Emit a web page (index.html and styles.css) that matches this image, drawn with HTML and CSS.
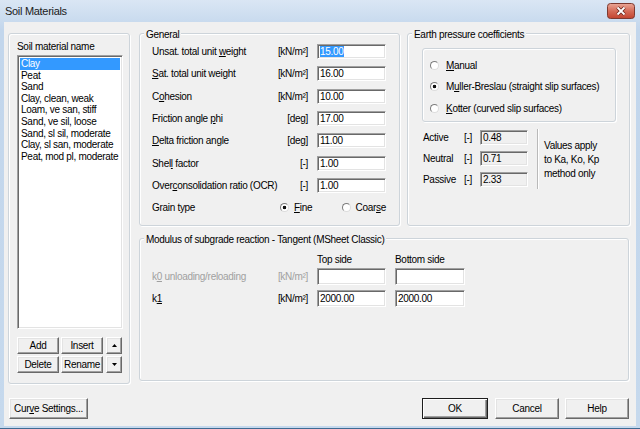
FILE: index.html
```html
<!DOCTYPE html>
<html lang="en">
<head>
  <meta charset="UTF-8">
  <title>Soil Materials</title>
  <link rel="stylesheet" href="styles.css">
</head>
<body>
  <div id="window">
    <div id="titlebar">
      <span class="title">Soil Materials</span>
      <span class="close-btn">
        <svg width="28" height="16" viewBox="0 0 28 16">
          <defs>
            <linearGradient id="closeGrad" x1="0" y1="0" x2="0" y2="1">
              <stop offset="0" stop-color="#eaa898"/>
              <stop offset="0.5" stop-color="#d56c58"/>
              <stop offset="1" stop-color="#c3432e"/>
            </linearGradient>
          </defs>
          <rect x="0.5" y="0.5" width="27" height="15" rx="3" fill="url(#closeGrad)" stroke="#7d3a30"/>
          <path d="M10.5 4.5 L17.5 11.5 M17.5 4.5 L10.5 11.5" stroke="#6a261d" stroke-width="3.4"/>
          <path d="M10.5 4.5 L17.5 11.5 M17.5 4.5 L10.5 11.5" stroke="#fff" stroke-width="1.8"/>
        </svg>
      </span>
    </div>

    <div id="client">
      <div class="main">
        <div class="group materials">
          <div class="list-label">Soil material name</div>
          <div class="listbox">
            <div class="item selected">Clay</div>
            <div class="item">Peat</div>
            <div class="item">Sand</div>
            <div class="item">Clay, clean, weak</div>
            <div class="item">Loam, ve san, stiff</div>
            <div class="item">Sand, ve sil, loose</div>
            <div class="item">Sand, sl sil, moderate</div>
            <div class="item">Clay, sl san, moderate</div>
            <div class="item">Peat, mod pl, moderate</div>
          </div>
          <div class="list-buttons">
            <div class="btn-row">
              <button class="btn">Add</button>
              <button class="btn">Insert</button>
              <button class="btn arrow"><svg width="5" height="3" viewBox="0 0 5 3"><path d="M2.5 0 L5 3 L0 3Z"/></svg></button>
            </div>
            <div class="btn-row">
              <button class="btn">Delete</button>
              <button class="btn">Rename</button>
              <button class="btn arrow"><svg width="5" height="3" viewBox="0 0 5 3"><path d="M0 0 L5 0 L2.5 3Z"/></svg></button>
            </div>
          </div>
        </div>

        <div class="right-col">
          <div class="top-row">
            <div class="group general">
              <div class="group-title">General</div>
              <div class="form-grid">
                <span class="label">Unsat. total unit <u>w</u>eight</span>
                <span class="unit">[kN/m²]</span>
                <span class="field"><span class="sel">15.00</span></span>

                <span class="label"><u>S</u>at. total unit weight</span>
                <span class="unit">[kN/m²]</span>
                <span class="field">16.00</span>

                <span class="label">C<u>o</u>hesion</span>
                <span class="unit">[kN/m²]</span>
                <span class="field">10.00</span>

                <span class="label">Friction angle <u>p</u>hi</span>
                <span class="unit">[deg]</span>
                <span class="field">17.00</span>

                <span class="label"><u>D</u>elta friction angle</span>
                <span class="unit">[deg]</span>
                <span class="field">11.00</span>

                <span class="label">Shel<u>l</u> factor</span>
                <span class="unit">[-]</span>
                <span class="field">1.00</span>

                <span class="label">Over<u>c</u>onsolidation ratio (OCR)</span>
                <span class="unit">[-]</span>
                <span class="field">1.00</span>

                <span class="label">Grain type</span>
                <span class="grain">
                  <span class="radio"><span class="dot checked"></span><span><u>F</u>ine</span></span>
                  <span class="radio"><span class="dot"></span><span>Coar<u>s</u>e</span></span>
                </span>
              </div>
            </div>

            <div class="group earth">
              <div class="group-title">Earth pressure coefficients</div>
              <div class="group radio-box">
                <span class="radio wide"><span class="dot"></span><span><u>M</u>anual</span></span>
                <span class="radio wide"><span class="dot checked"></span><span>M<u>u</u>ller-Breslau (straight slip surfaces)</span></span>
                <span class="radio wide"><span class="dot"></span><span><u>K</u>otter (curved slip surfaces)</span></span>
              </div>
              <div class="coef">
                <div class="coef-grid">
                  <span>Active</span><span>[-]</span><span class="field ro">0.48</span>
                  <span>Neutral</span><span>[-]</span><span class="field ro">0.71</span>
                  <span>Passive</span><span>[-]</span><span class="field ro">2.33</span>
                </div>
                <div class="sep"></div>
                <div class="notes">Values apply<br>to Ka, Ko, Kp<br>method only</div>
              </div>
            </div>
          </div>

          <div class="group modulus">
            <div class="group-title">Modulus of subgrade reaction - Tangent (MSheet Classic)</div>
            <div class="mod-grid">
              <span></span><span></span>
              <span class="col-head">Top side</span>
              <span class="col-head">Bottom side</span>

              <span class="label disabled">k<u>0</u> unloading/reloading</span>
              <span class="unit disabled">[kN/m²]</span>
              <span class="field tall"></span>
              <span class="field tall"></span>

              <span class="label k1">k<u>1</u></span>
              <span class="unit k1">[kN/m²]</span>
              <span class="field tall k1">2000.00</span>
              <span class="field tall k1">2000.00</span>
            </div>
          </div>
        </div>
      </div>

      <div class="footer">
        <button class="btn big curve">Cur<u>v</u>e Settings...</button>
        <div class="dlg-buttons">
          <button class="btn big default">OK</button>
          <button class="btn big">Cancel</button>
          <button class="btn big">Help</button>
        </div>
      </div>
    </div>
  </div>
</body>
</html>
```

FILE: styles.css
```css
body {
  margin: 0;
  font-family: "Liberation Sans", Arial, sans-serif;
  font-size: 10px;
  letter-spacing: -0.3px;
  color: #000;
}
#window {
  width: 640px;
  height: 429px;
  box-sizing: border-box;
  display: flex;
  flex-direction: column;
  padding: 0 4px 2px;
  background: linear-gradient(#dae6f4, #c2d6ec 30px, #c6d9ed);
  border-bottom: 1px solid #3e6a92;
}
#titlebar {
  height: 22px;
  margin: 0 -4px;
  padding: 0 5px;
  display: flex;
  align-items: center;
  justify-content: space-between;
}
#titlebar .title {
  font-size: 11px;
  color: #1b1b1b;
}
.close-btn {
  display: flex;
  width: 28px;
  height: 16px;
}
#client {
  flex: 1;
  background-color: #f0f0f0;
  padding: 11px 6px 0 4px;
  display: flex;
  flex-direction: column;
}
.main {
  display: flex;
  gap: 9px;
  align-items: flex-start;
}

/* group boxes */
.group {
  box-sizing: border-box;
  border: 1px solid #cdd4da;
  border-radius: 3px;
  box-shadow: inset 1px 1px #fff, 1px 1px #fff;
  display: flex;
  flex-direction: column;
}
.group-title {
  align-self: flex-start;
  margin: -5px 0 0 4px;
  padding: 0 2px;
  background-color: #f0f0f0;
  line-height: 12px;
  white-space: nowrap;
}

/* sunken controls */
.field, .listbox {
  box-sizing: border-box;
  background-color: #fff;
  border: 1px solid;
  border-color: #a0a0a0 #fff #fff #a0a0a0;
  box-shadow: inset 1px 1px #696969, inset -1px -1px #e3e3e3;
}
.field {
  height: 15px;
  padding-left: 2px;
  display: flex;
  align-items: center;
  white-space: nowrap;
}
.field.tall {
  height: 17px;
}
.field.ro {
  background-color: #f0f0f0;
}
.sel {
  background-color: #3399ff;
  color: #fff;
}

/* buttons */
.btn {
  box-sizing: border-box;
  margin: 0;
  padding: 0;
  font: inherit;
  letter-spacing: inherit;
  color: #000;
  background-color: #f0f0f0;
  border: 1px solid;
  border-color: #fff #696969 #696969 #fff;
  box-shadow: inset -1px -1px #a0a0a0, inset 1px 1px #e3e3e3;
  display: flex;
  align-items: center;
  justify-content: center;
}
.btn.default {
  border-color: #1e1e1e;
  box-shadow: inset 1px 1px #fff, inset -1px -1px #696969, inset -2px -2px #a0a0a0;
}

/* left: material list */
.materials {
  width: 122px;
  height: 351px;
  padding: 7px 6px 0 8px;
}
.list-label {
  line-height: 12px;
  margin-bottom: 2px;
}
.listbox {
  height: 274px;
  padding: 2px 2px 0 2px;
}
.listbox .item {
  line-height: 11.6px;
  padding-left: 1px;
  white-space: nowrap;
}
.listbox .item.selected {
  background-color: #3399ff;
  color: #fff;
}
.list-buttons {
  margin-top: 8px;
  display: flex;
  flex-direction: column;
  gap: 2px;
}
.btn-row {
  display: flex;
  gap: 2px;
}
.btn-row .btn {
  width: 42px;
  height: 17px;
}
.btn-row .btn.arrow {
  width: 16px;
  margin-left: 1px;
}

/* right column */
.right-col {
  display: flex;
  flex-direction: column;
  width: 491px;
}
.top-row {
  display: flex;
  gap: 7px;
}
.general {
  width: 261px;
  height: 193px;
}
.form-grid {
  display: grid;
  grid-template-columns: 111px 36px 69px;
  grid-auto-rows: 15px;
  column-gap: 9px;
  row-gap: 7.33px;
  align-items: center;
  margin: 3px 0 0 12px;
}
.label {
  white-space: nowrap;
}
.unit {
  justify-self: end;
  white-space: nowrap;
}
.grain {
  grid-column: 2 / 4;
  display: flex;
  justify-content: space-between;
  padding-left: 8px;
}
.radio {
  display: inline-flex;
  align-items: center;
  gap: 5px;
  white-space: nowrap;
}
.radio.wide {
  gap: 7px;
  height: 12px;
}
.dot {
  box-sizing: border-box;
  width: 9px;
  height: 9px;
  border-radius: 50%;
  border: 1px solid;
  border-color: #7c7c7c #dcdcdc #dcdcdc #7c7c7c;
  background: #fff;
}
.dot.checked {
  background: radial-gradient(circle, #111 0 1.4px, #fff 2.1px);
}

/* earth pressure */
.earth {
  width: 223px;
  height: 193px;
}
.radio-box {
  margin: 7px 0 0 14px;
  width: 194px;
  height: 74px;
  padding: 10px 0 0 7px;
  gap: 9.5px;
}
.coef {
  display: flex;
  margin: 8px 0 0 15px;
}
.coef-grid {
  display: grid;
  grid-template-columns: 41px 16px 48px;
  grid-auto-rows: 15px;
  row-gap: 6px;
  align-items: center;
}
.sep {
  width: 0;
  height: 60px;
  margin: -1px 0 0 9px;
  border-left: 1px solid #b9b9b9;
  border-right: 1px solid #fff;
}
.notes {
  margin-left: 5px;
  padding-top: 9px;
  line-height: 14px;
}

/* modulus */
.modulus {
  width: 490px;
  height: 143px;
  margin-top: 12px;
}
.mod-grid {
  display: grid;
  grid-template-columns: 111px 36px 69px 70px;
  column-gap: 9px;
  row-gap: 2px;
  align-items: center;
  margin: 8px 0 0 12px;
}
.col-head {
  line-height: 12px;
  white-space: nowrap;
}
.mod-grid .k1 {
  margin-top: 3px;
}
.disabled {
  color: #a0a0a0;
}

/* footer */
.footer {
  display: flex;
  justify-content: space-between;
  margin-top: 14px;
  padding: 0 1px;
}
.btn.big {
  height: 21px;
  width: 64px;
}
.btn.curve {
  width: 79px;
}
.btn.default {
  width: 66px;
}
.dlg-buttons {
  display: flex;
  gap: 6px;
}
.dlg-buttons .default {
  margin-right: 1px;
}
```
